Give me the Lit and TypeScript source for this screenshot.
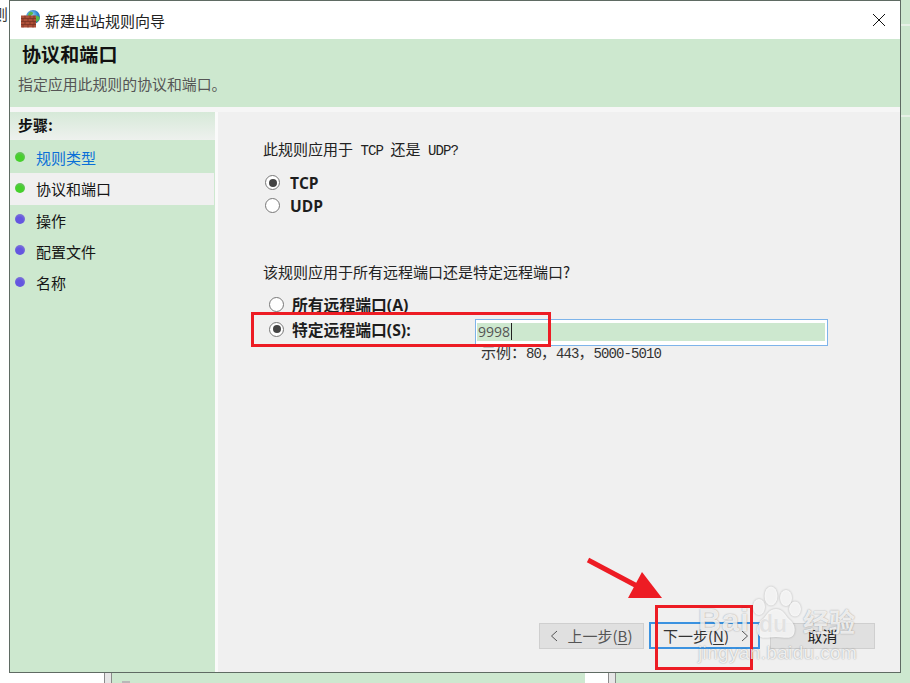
import { LitElement, html, css } from "lit";
import { customElement } from "lit/decorators.js";

@customElement("app-root")
export class AppRoot extends LitElement {
  static styles = css`
    :host {
      display: block;
      position: relative;
      width: 910px;
      height: 683px;
      overflow: hidden;
      background: #fff;
      font-family: "Noto Sans CJK SC", sans-serif;
      color: #111;
    }
    /* desktop behind the window */
    .stray { position: absolute; left: -7px; top: 3px; font-size: 15px; line-height: 22px; color: #333; }
    .strip { position: absolute; left: 901px; top: 0; width: 9px; height: 683px; background: #cde8cf; }
    .strip-line { position: absolute; left: 901px; width: 9px; height: 2px; background: #e6f1e6; }
    .l1 { top: 24px; }
    .l2 { top: 115px; }
    .under { position: absolute; top: 673px; height: 10px; }
    .u-green { left: 110px; width: 475px; background: #cde8cf; }
    .u-green2 { left: 615px; width: 286px; background: #cde8cf; }
    .u-line { width: 6px; border-left: 1px solid #8a8a8a; border-right: 1px solid #8a8a8a; background: #e6e6e6; }
    .u1 { left: 104px; }
    .u2 { left: 608px; }
    .u-mark { position: absolute; left: 122px; top: 681px; width: 8px; height: 2px; background: #b8b8b8; }

    /* window */
    .win {
      position: absolute;
      left: 9px;
      top: 0;
      width: 892px;
      height: 673px;
      box-sizing: border-box;
      border: 1px solid #5f6b63;
      background: #fff;
      display: flex;
      flex-direction: column;
    }
    .title {
      height: 38px;
      flex: none;
      display: flex;
      align-items: center;
      padding-left: 11px;
      gap: 4px;
      font-size: 15px;
      background: #fff;
    }
    .title svg { flex: none; }
    .title span { flex: 1; color: #222; }
    .close { flex: none; width: 14px; height: 14px; margin-right: 14px; }
    .head {
      height: 68px;
      flex: none;
      background: #cde8cf;
      box-sizing: border-box;
      padding: 3px 0 0 12px;
    }
    .head h1 { margin: 0; font-size: 19px; line-height: 24px; font-weight: 700; color: #111; letter-spacing: 0.1px; }
    .head p { margin: 8px 0 0 -4px; font-size: 14.9px; line-height: 20px; color: #555; }
    .body {
      flex: 1;
      min-height: 0;
      display: flex;
      background: #f6f6f6;
      padding-top: 5px;
    }
    .side {
      width: 205px;
      flex: none;
      background: #cde8cf;
      display: flex;
      flex-direction: column;
    }
    .side-head {
      height: 28px;
      box-sizing: border-box;
      padding-left: 8px;
      font-size: 15px;
      font-weight: 700;
      line-height: 26px;
      background: linear-gradient(#d6e9d8, #eef1ee);
      margin-bottom: 2px;
    }
    .step {
      height: 31.25px;
      display: flex;
      align-items: center;
      font-size: 15px;
      padding-left: 5px;
      gap: 11px;
      color: #151515;
    }
    .step.done { color: #0a6fd8; }
    .step.cur { background: #f0f0f0; margin-right: 1px; }
    .dot { width: 10px; height: 10px; border-radius: 50%; flex: none; margin-top: -2px; }
    .dot.g { background: radial-gradient(circle at 45% 65%, #46d02c 40%, #5fc452 65%, #8fb98f 100%); }
    .dot.b { background: radial-gradient(circle at 45% 65%, #6456e0 40%, #7a70d8 70%, #a6a6c8 100%); }
    .gap { width: 3px; flex: none; background: #fafafa; }
    .main {
      flex: 1;
      background: #f0f0f0;
      position: relative;
      display: flex;
      flex-direction: column;
      padding: 26px 0 0 45px;
      box-sizing: border-box;
    }
    .q { font-size: 15px; line-height: 22px; color: #222; white-space: pre; }
    .mono { font-family: "Liberation Mono", monospace; font-size: 14px; letter-spacing: -0.9px; }
    .opts { margin-top: 9px; display: flex; flex-direction: column; }
    .opt {
      display: flex;
      align-items: center;
      height: 23px;
      gap: 10px;
      margin-left: 2px;
      font-family: "Open Sans", "Noto Sans CJK SC", sans-serif;
      font-size: 15.5px;
      font-weight: 700;
      color: #1d1d1d;
    }
    .radio {
      width: 15px;
      height: 15px;
      box-sizing: border-box;
      border: 1.5px solid #777;
      border-radius: 50%;
      background: #fff;
      flex: none;
      display: flex;
      align-items: center;
      justify-content: center;
    }
    .radio.on::after { content: ""; width: 8px; height: 8px; border-radius: 50%; background: #444; }
    .q2 { margin-top: 44px; }
    .ports { margin-top: 10px; margin-left: 6px; display: flex; flex-direction: column; }
    .port { display: flex; align-items: center; gap: 8px; font-family: "Open Sans", "Noto Sans CJK SC", sans-serif; font-size: 15.8px; font-weight: 700; color: #1d1d1d; }
    .port.a { height: 22px; }
    .port.s { height: 26px; margin-top: 1px; }
    .port .lab { width: 175px; flex: none; white-space: nowrap; }
    .input {
      width: 353px;
      height: 27px;
      margin-top: 6px;
      box-sizing: border-box;
      flex: none;
      border: 1px solid #7eb4ea;
      background: #fff;
      padding: 3px 2px 4px 1px;
      display: flex;
    }
    .fill {
      flex: 1;
      background: #cde8cf;
      font-family: "Open Sans", sans-serif;
      font-size: 14px;
      font-weight: 400;
      line-height: 17px;
      color: #555;
      padding-left: 1px;
      display: flex;
      align-items: center;
    }
    .caret { width: 1px; height: 17px; background: #222; margin-left: 1px; }
    .hint { margin: 1px 0 0 218px; font-size: 15px; line-height: 18px; color: #333; white-space: pre; }
    .buttons {
      position: absolute;
      left: 321px;
      bottom: 23px;
      display: flex;
      align-items: center;
    }
    .btn {
      width: 105px;
      height: 26px;
      box-sizing: border-box;
      border: 1px solid #cfcfcf;
      background: #e0e0e0;
      font-size: 15px;
      color: #555;
      display: flex;
      align-items: center;
      justify-content: center;
      font-family: "Noto Sans CJK SC", sans-serif;
      padding: 0;
      white-space: pre;
    }
    .btn.next {
      width: 111px;
      height: 27px;
      margin: 0 10px 0 5px;
      border: 2px solid #3b92e0;
      background: #ececec;
      color: #333;
      padding-left: 3px;
    }
    .btn.cancel { color: #222; }
    .btn u { text-underline-offset: 2px; }
    .chev { width: 8px; height: 12px; flex: none; }
    .to-label { margin-left: 9px; }
    .to-chev { margin-left: 12px; }

    /* annotations and watermark over the page */
    .over { position: absolute; left: 0; top: 0; width: 910px; height: 683px; pointer-events: none; }
    .over svg { position: absolute; left: 0; top: 0; }
    .paw { fill: rgba(255, 255, 255, 0.82); filter: drop-shadow(0 0 1px rgba(0, 0, 0, 0.3)); }
    .wm { position: absolute; white-space: nowrap; color: rgba(255, 255, 255, 0.82); text-shadow: 0 0 1.500px rgba(0, 0, 0, 0.4); }
    .wm1 { left: 698px; top: 602px; font-family: "Liberation Sans", sans-serif; font-size: 32px; line-height: 36px; font-weight: 700; letter-spacing: 0.5px; }
    .wm4 { left: 759px; top: 611px; font-family: "Liberation Sans", sans-serif; font-size: 23px; line-height: 27px; font-weight: 700; color: rgba(225, 225, 225, 0.95); text-shadow: 0 0 1px #fff; }
    .wm2 { left: 803px; top: 604px; font-size: 26px; line-height: 34px; font-weight: 700; }
    .wm3 { left: 698px; top: 642px; font-family: "Liberation Sans", sans-serif; font-size: 19px; line-height: 22px; letter-spacing: 0.35px; }
  `;

  render() {
    const steps = [
      ["规则类型", "g", "done"],
      ["协议和端口", "g", "cur"],
      ["操作", "b", ""],
      ["配置文件", "b", ""],
      ["名称", "b", ""],
    ];
    return html`
      <div class="stray">则</div>
      <div class="strip"></div>
      <div class="strip-line l1"></div>
      <div class="strip-line l2"></div>
      <div class="under u-green"></div>
      <div class="under u-green2"></div>
      <div class="under u-line u1"></div>
      <div class="under u-line u2"></div>
      <div class="u-mark"></div>

      <div class="win">
        <div class="title">
          <svg width="20" height="20" viewBox="0 0 20 20">
            <defs>
              <radialGradient id="gl" cx="0.4" cy="0.35" r="0.7">
                <stop offset="0" stop-color="#9fd8f5" />
                <stop offset="0.6" stop-color="#2f86d0" />
                <stop offset="1" stop-color="#1d5fa8" />
              </radialGradient>
            </defs>
            <circle cx="12" cy="7" r="7" fill="url(#gl)" />
            <path d="M8.500 2.200c2-1 3.500 0 3.600 1.300.1 1.500-2 1.200-2.600 2.600-.4 1-1.800.6-2.600-.2C7.300 4.300 7.500 3 8.500 2.200zM14 6c1.500-.5 3.500.2 4.800 1.500-.3 2-1.400 3.800-3 4.500-1.200-1.500-2.700-4.800-1.800-6z" fill="#58b947" />
            <rect x="0" y="5.500" width="15" height="12" fill="#ad4f38" />
            <path d="M0 8.500h15M0 11.500h15M0 14.500h15M4 5.500v3M9 5.500v3M13 5.500v3M2 8.500v3M7 8.500v3M12 8.500v3M4 11.500v3M9 11.500v3M13 11.500v3M2 14.500v3M7 14.500v3M12 14.500v3" stroke="#7a3323" stroke-width="0.8" fill="none" />
          </svg>
          <span>新建出站规则向导</span>
          <svg class="close" viewBox="0 0 14 14"><path d="M1 1l12 12M13 1L1 13" stroke="#111" stroke-width="1" fill="none" /></svg>
        </div>
        <div class="head">
          <h1>协议和端口</h1>
          <p>指定应用此规则的协议和端口。</p>
        </div>
        <div class="body">
          <div class="side">
            <div class="side-head">步骤:</div>
            ${steps.map(
              ([t, c, s]) => html`<div class="step ${s}"><i class="dot ${c}"></i><span>${t}</span></div>`
            )}
          </div>
          <div class="gap"></div>
          <div class="main">
            <div class="q">此规则应用于<span class="mono"> TCP </span>还是<span class="mono"> UDP?</span></div>
            <div class="opts">
              <div class="opt"><i class="radio on"></i>TCP</div>
              <div class="opt"><i class="radio"></i>UDP</div>
            </div>
            <div class="q q2">该规则应用于所有远程端口还是特定远程端口?</div>
            <div class="ports">
              <div class="port a"><i class="radio"></i><span class="lab">所有远程端口(A)</span></div>
              <div class="port s">
                <i class="radio on"></i><span class="lab">特定远程端口(S):</span>
                <div class="input"><div class="fill">9998<i class="caret"></i></div></div>
              </div>
            </div>
            <div class="hint">示例：<span class="mono">80</span>，<span class="mono">443</span>，<span class="mono">5000-5010</span></div>
            <div class="buttons">
              <button class="btn">
                <svg class="chev" viewBox="0 0 8 12"><path d="M7 1L1.500 6L7 11" fill="none" stroke="#555" stroke-width="1" /></svg>
                <span class="to-label">上一步(<u>B</u>)</span>
              </button>
              <button class="btn next">
                <span>下一步(<u>N</u>)</span>
                <svg class="chev to-chev" viewBox="0 0 8 12"><path d="M1 1L6.500 6L1 11" fill="none" stroke="#555" stroke-width="1" /></svg>
              </button>
              <button class="btn cancel">取消</button>
            </div>
          </div>
        </div>
      </div>

      <div class="over">
        <svg width="910" height="683">
          <rect x="252.500" y="313.500" width="297" height="32" fill="none" stroke="#ed1c24" stroke-width="3" />
          <rect x="656.500" y="606.500" width="95" height="62" fill="none" stroke="#ed1c24" stroke-width="3" />
          <path d="M588 560L637 586" stroke="#ed1c24" stroke-width="5" fill="none" />
          <path d="M642 572L628 598L662 598Z" fill="#ed1c24" />
          <g class="paw">
            <ellipse cx="759" cy="607" rx="6" ry="8" />
            <ellipse cx="771" cy="596" rx="6.500" ry="9.500" />
            <ellipse cx="786" cy="598" rx="6" ry="8" />
            <ellipse cx="795" cy="609" rx="6" ry="7.500" />
            <path d="M776 609c-7 0-9 6-13 10-5 4-7 9-5 15 2 5 7 4 18 3 10 1 16 2 18-3 2-6 0-11-5-15-4-4-6-10-13-10z" />
          </g>
        </svg>
        <div class="wm wm1">Bai</div>
        <div class="wm wm4">du</div>
        <div class="wm wm2">经验</div>
        <div class="wm wm3">jingyan.baidu.com</div>
      </div>
    `;
  }
}
